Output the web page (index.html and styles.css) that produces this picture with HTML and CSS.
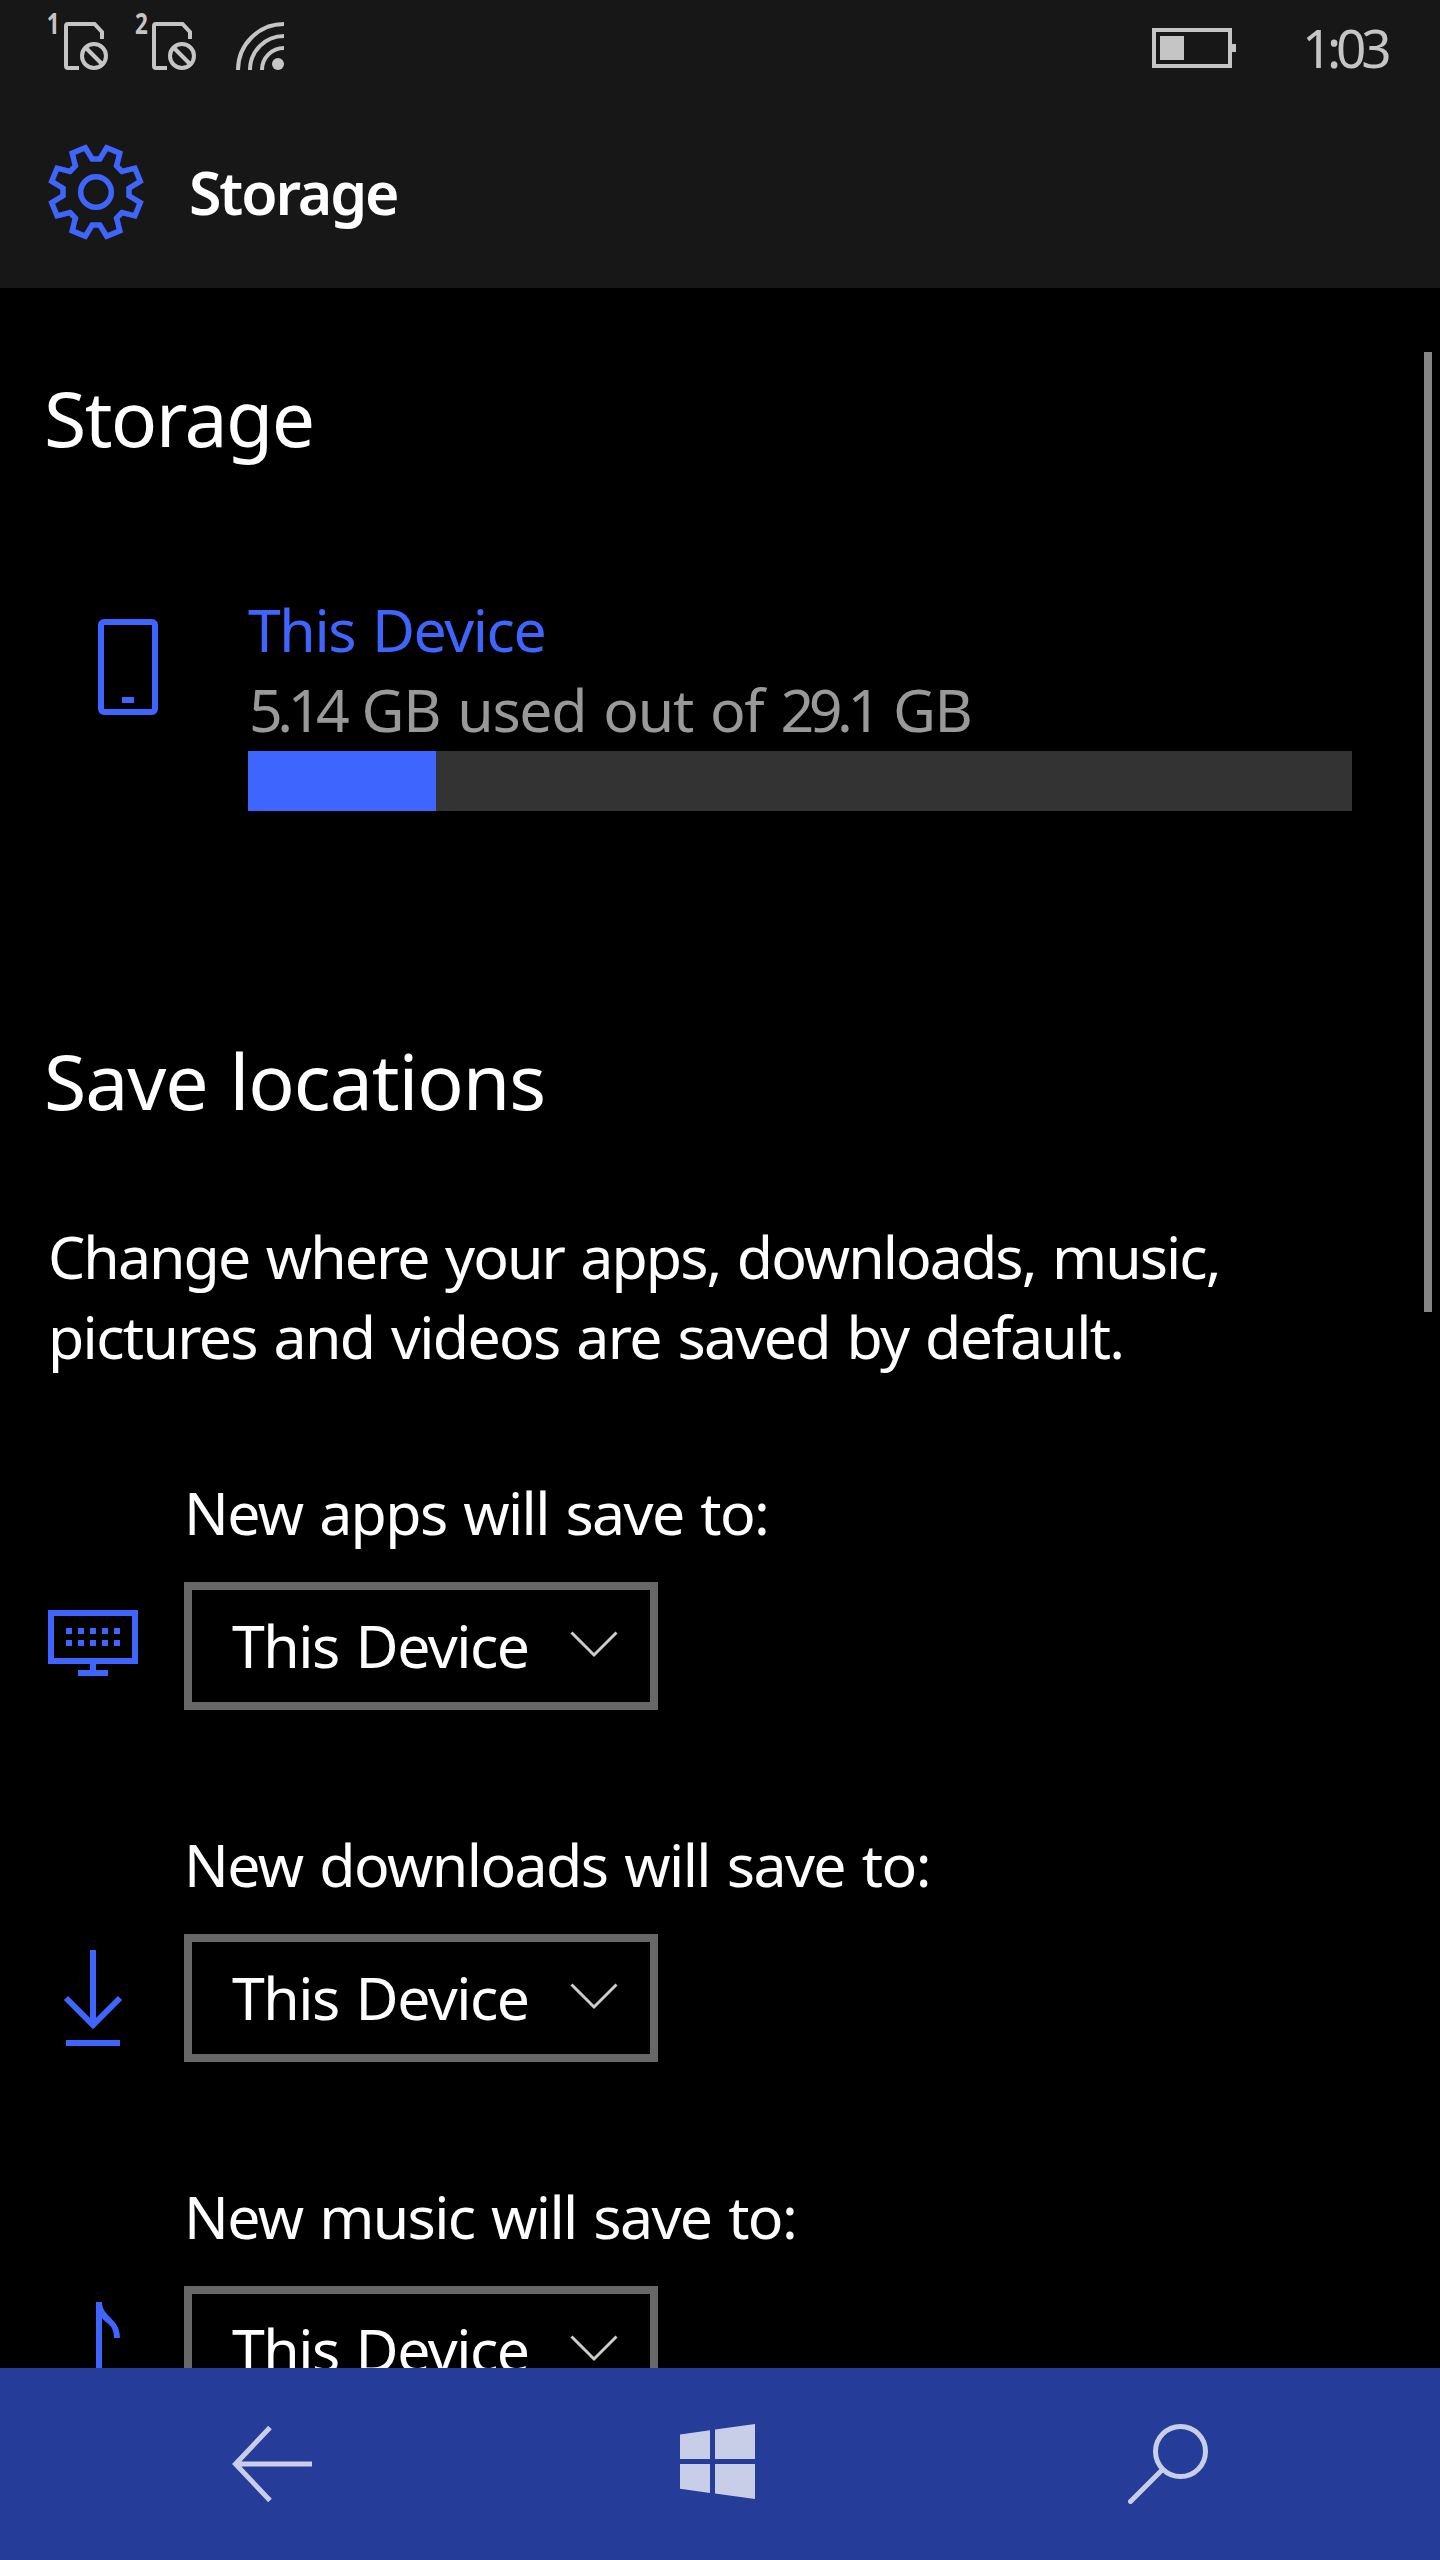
FILE: index.html
```html
<!DOCTYPE html>
<html lang="en">
<head>
<meta charset="utf-8">
<title>Storage</title>
<link rel="stylesheet" href="styles.css">
</head>
<body>
<div class="phone">
  <header class="top">
    <div class="status">
      <div class="status-left">
        <svg class="sim" width="64" height="60" viewBox="0 0 64 60">
          <text class="sim-no" transform="translate(-1.3 24) scale(.8 1)">1</text>
          <path d="M54 29V22L46.5 14H20q-2 0-2 2V56q0 2 2 2H31" fill="none" stroke="#c5c5c5" stroke-width="4"/>
          <circle cx="46" cy="46" r="15.5" fill="#171717"/>
          <circle cx="46" cy="46" r="12" fill="none" stroke="#c5c5c5" stroke-width="4"/>
          <path d="M38 38L54 54" stroke="#c5c5c5" stroke-width="4"/>
        </svg>
        <svg class="sim" width="64" height="60" viewBox="0 0 64 60">
          <text class="sim-no" transform="translate(-1 24) scale(.8 1)">2</text>
          <path d="M54 29V22L46.5 14H20q-2 0-2 2V56q0 2 2 2H31" fill="none" stroke="#c5c5c5" stroke-width="4"/>
          <circle cx="46" cy="46" r="15.5" fill="#171717"/>
          <circle cx="46" cy="46" r="12" fill="none" stroke="#c5c5c5" stroke-width="4"/>
          <path d="M38 38L54 54" stroke="#c5c5c5" stroke-width="4"/>
        </svg>
        <svg class="wifi" width="48" height="48" viewBox="0 0 48 48">
          <g fill="none" stroke="#c5c5c5" stroke-width="4">
            <path d="M2 48A46 46 0 0 1 48 2"/>
            <path d="M14 48A34 34 0 0 1 48 14"/>
            <path d="M26 48A22 22 0 0 1 48 26"/>
          </g>
          <circle cx="42" cy="42" r="6" fill="#c5c5c5"/>
        </svg>
      </div>
      <div class="status-right">
        <svg class="battery" width="84" height="40" viewBox="0 0 84 40">
          <rect x="2" y="2" width="76" height="36" fill="none" stroke="#c5c5c5" stroke-width="4"/>
          <path d="M8 8H32V32H8ZM80 16H84V24H80Z" fill="#c5c5c5"/>
        </svg>
        <span class="clock">1:03</span>
      </div>
    </div>
    <div class="titlebar">
      <svg width="96" height="96" viewBox="-48 -48 96 96" fill="none" stroke="#3f65ff" stroke-width="5.5">
        <path d="M-10.7-44.3L-3.8-33H3.8L10.7-44.3L23.8-38.9L20.6-26L26-20.6L38.9-23.8L44.3-10.7L33-3.8V3.8L44.3 10.7L38.9 23.8L26 20.6L20.6 26L23.8 38.9L10.7 44.3L3.8 33H-3.8L-10.7 44.3L-23.8 38.9L-20.6 26L-26 20.6L-38.9 23.8L-44.3 10.7L-33 3.8V-3.8L-44.3-10.7L-38.9-23.8L-26-20.6L-20.6-26L-23.8-38.9Z"/>
        <circle r="15.3"/>
      </svg>
      <h1 class="page-title">Storage</h1>
    </div>
  </header>

  <main class="content">
    <h2 class="heading heading-storage">Storage</h2>
    <section class="device">
      <svg class="device-icon" width="60" height="96" viewBox="0 0 60 96">
        <rect x="3" y="3" width="54" height="90" rx="3" fill="none" stroke="#3f65ff" stroke-width="6"/>
        <path d="M24 78H36V84H24Z" fill="#3f65ff"/>
      </svg>
      <div class="device-info">
        <div class="device-name">This Device</div>
        <div class="device-usage"><span class="num">5.14</span> GB used out of <span class="num">29.1</span> GB</div>
        <div class="bar"><div class="bar-fill"></div></div>
      </div>
    </section>

    <h2 class="heading heading-save">Save locations</h2>
    <p class="intro"><span class="intro-first">Change where your apps, downloads, music,</span><br>pictures and videos are saved by default.</p>

    <section class="location">
      <svg class="location-icon" width="90" height="96" viewBox="0 0 90 96">
        <path d="M3 15H87V63H3Z" fill="none" stroke="#3f65ff" stroke-width="6"/>
        <path d="M18 33H72M18 45H72" stroke="#3f65ff" stroke-width="6" stroke-dasharray="6 6"/>
        <path d="M42 66H48V72H60V78H30V72H42Z" fill="#3f65ff"/>
      </svg>
      <div class="location-body">
        <div class="label">New apps will save to:</div>
        <div class="select"><span>This Device</span>
          <svg class="chevron" width="48" height="27" viewBox="0 0 48 27"><path d="M1.5 1.5L24 24L46.5 1.5" fill="none" stroke="#ccc" stroke-width="3"/></svg>
        </div>
      </div>
    </section>

    <section class="location">
      <svg class="location-icon" width="90" height="96" viewBox="0 0 90 96">
        <path d="M45 0V73" stroke="#3f65ff" stroke-width="6"/>
        <path d="M18 48L45 75L72 48" fill="none" stroke="#3f65ff" stroke-width="6"/>
        <path d="M18 90H72V96H18Z" fill="#3f65ff"/>
      </svg>
      <div class="location-body">
        <div class="label label-downloads">New downloads will save to:</div>
        <div class="select"><span>This Device</span>
          <svg class="chevron" width="48" height="27" viewBox="0 0 48 27"><path d="M1.5 1.5L24 24L46.5 1.5" fill="none" stroke="#ccc" stroke-width="3"/></svg>
        </div>
      </div>
    </section>

    <section class="location">
      <svg class="location-icon" width="90" height="96" viewBox="0 0 90 96">
        <path d="M48 0H54C54 15 72 16 72 36H66C66 22 58 22 54 16V84H48Z" fill="#3f65ff"/>
        <ellipse cx="39" cy="82" rx="12" ry="11" fill="none" stroke="#3f65ff" stroke-width="6"/>
      </svg>
      <div class="location-body">
        <div class="label">New music will save to:</div>
        <div class="select"><span>This Device</span>
          <svg class="chevron" width="48" height="27" viewBox="0 0 48 27"><path d="M1.5 1.5L24 24L46.5 1.5" fill="none" stroke="#ccc" stroke-width="3"/></svg>
        </div>
      </div>
    </section>
    <div class="scrollbar"></div>
  </main>

  <nav class="navbar">
    <svg class="nav-back" width="80" height="76" viewBox="0 0 80 76" fill="none" stroke="#c9cee8" stroke-width="5">
      <path d="M38 1.5L3.5 38L38 74.5M4 38H80"/>
    </svg>
    <svg class="nav-home" width="75" height="75" viewBox="0 0 75 75" fill="#c9cee8">
      <path d="M0 10.5L30 6.3V35H0ZM35 5.5L75 0V35H35ZM0 40H30V69L0 64.7ZM35 40H75V75L35 69.5Z"/>
    </svg>
    <svg class="nav-search" width="80" height="80" viewBox="0 0 80 80" fill="none" stroke="#c9cee8" stroke-width="5">
      <circle cx="52.5" cy="27.5" r="25"/>
      <path d="M34.5 45.5L2.5 77.5" stroke-linecap="round"/>
    </svg>
  </nav>
</div>
</body>
</html>
```
FILE: styles.css
```css
* { box-sizing: border-box; }

body {
  margin: 0;
  background: #000;
  color: #fff;
  font-family: "Noto Sans", "Open Sans", sans-serif;
  font-size: 59px;
  line-height: 80px;
  letter-spacing: -1.63px;
  word-spacing: 3px;
  white-space: nowrap;
}

svg { display: block; flex: none; }

h1, h2, p { margin: 0; }

.phone {
  display: flex;
  flex-direction: column;
  width: 1440px;
  height: 2560px;
  overflow: hidden;
}

/* Status and title bars */
.top {
  flex: none;
  height: 288px;
  background: #171717;
}

.status {
  display: flex;
  justify-content: space-between;
  height: 96px;
  padding: 10px 48px 0;
}

.status-left { display: flex; }
.sim { margin-right: 24px; overflow: visible; }
.wifi { margin: 12px 0 0 12px; }
.sim-no { font-size: 28px; font-weight: 700; fill: #c5c5c5; }

.status-right { display: flex; }
.battery { margin: 18px 66px 0 0; }

.clock {
  width: 90px;
  font-size: 53px;
  line-height: 76px;
  letter-spacing: -5.2px;
  color: #c5c5c5;
}

.titlebar {
  display: flex;
  align-items: center;
  height: 192px;
  padding-left: 48px;
}

.page-title {
  margin-left: 45px;
  padding-bottom: 1px;
  font-size: 59px;
  font-weight: 600;
  letter-spacing: -2.1px;
}

/* Scrolling page */
.content {
  position: relative;
  flex: none;
  height: 2080px;
  padding: 80px 0 0;
  overflow: hidden;
}

.heading {
  padding-left: 44px;
  font-size: 77px;
  font-weight: 400;
  line-height: 100px;
  letter-spacing: -1.1px;
}

.heading-storage { letter-spacing: -1.6px; }
.heading-save { margin-top: 220px; }

.device {
  display: flex;
  margin-top: 121px;
  padding: 0 88px 0 98px;
}

.device-icon { margin: 30px 90px 0 0; }
.device-info { flex: 1; }
.device-name { letter-spacing: -1.43px; }
.device-name { color: #3f65ff; }
.device-usage { padding-left: 1px; color: #999; letter-spacing: -1.3px; }
.num { letter-spacing: -5.4px; }

.bar {
  height: 60px;
  margin-top: 2px;
  background: #333;
}

.bar-fill { width: 17.03%; height: 60px; background: #3f65ff; }

.intro { margin: 85px 0 96px 48px; letter-spacing: -1.68px; }
.intro-first { letter-spacing: -1.93px; }

.location {
  display: flex;
  margin-bottom: 114px;
  padding-left: 48px;
}

.location-icon { margin: 126px 46px 0 0; }
.label-downloads { letter-spacing: -1.57px; }

.select {
  display: flex;
  align-items: center;
  justify-content: space-between;
  width: 474px;
  height: 128px;
  margin-top: 30px;
  padding: 0 32px 3px 40px;
  border: 8px solid #686868;
  letter-spacing: -1.5px;
}

.scrollbar {
  position: absolute;
  top: 64px;
  right: 8px;
  width: 8px;
  height: 960px;
  background: #858585;
}

/* System navigation */
.navbar {
  display: flex;
  flex: none;
  height: 192px;
  background: #253c99;
}

.nav-back { margin: 58px 0 0 232px; }
.nav-home { margin: 56px 0 0 368px; }
.nav-search { margin: 56px 0 0 373px; }
```
